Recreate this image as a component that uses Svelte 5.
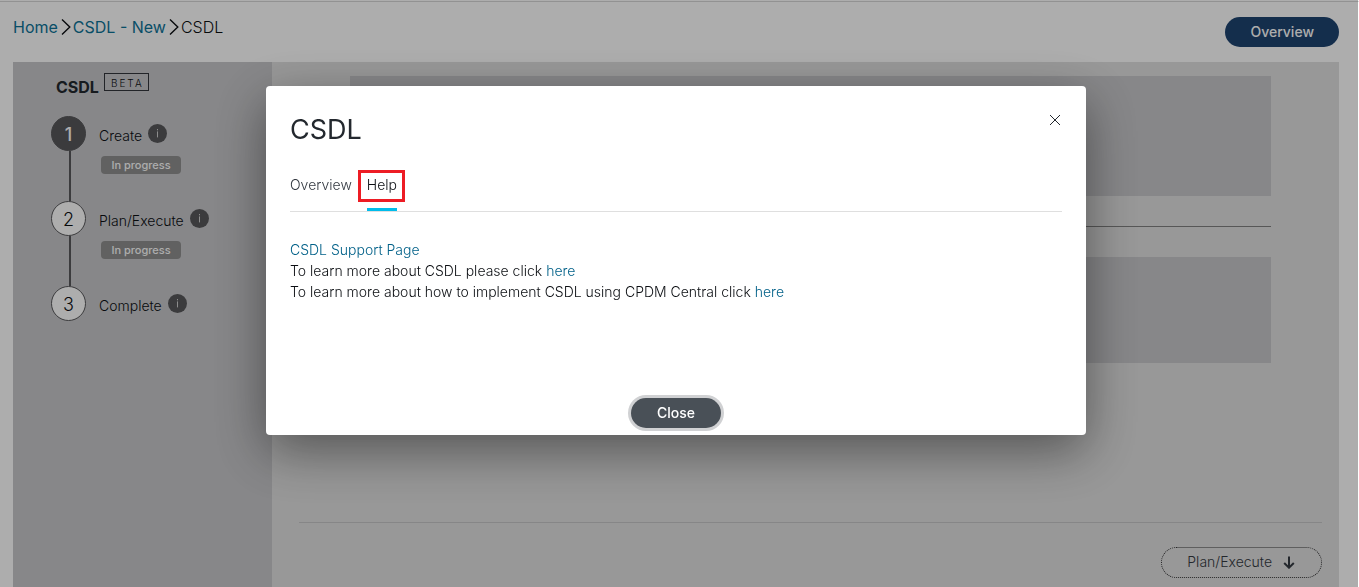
<script>
  let { steps = [
    { number: 1, label: 'Create', status: 'In progress', active: true },
    { number: 2, label: 'Plan/Execute', status: 'In progress', active: false },
    { number: 3, label: 'Complete', status: '', active: false }
  ] } = $props();

  let open = $state(true);
  let tab = $state('help');
</script>

<div class="page">
  <header>
    <nav class="crumbs" aria-label="Breadcrumb">
      <a href="#home">Home</a>
      <svg width="10" height="18" viewBox="0 0 10 18" aria-hidden="true"><path d="M1 1.5 8.8 9 1 16.5" /></svg>
      <a href="#new">CSDL - New</a>
      <svg width="10" height="18" viewBox="0 0 10 18" aria-hidden="true"><path d="M1 1.5 8.8 9 1 16.5" /></svg>
      <span>CSDL</span>
    </nav>
    <button class="pill primary" onclick={() => (open = true)}>Overview</button>
  </header>

  <div class="body">
    <aside>
      <div class="brand"><strong>CSDL</strong><span class="beta">BETA</span></div>
      <ol>
        {#each steps as step}
          <li>
            <span class="dot" class:active={step.active}>{step.number}</span>
            <div class="info">
              <div class="name">
                <span>{step.label}</span>
                <svg width="19" height="19" viewBox="0 0 19 19" aria-hidden="true">
                  <circle cx="9.5" cy="9.5" r="9.5" />
                  <path d="M9.5 7.4v6M9.5 5v1.3" />
                </svg>
              </div>
              {#if step.status}<span class="status">{step.status}</span>{/if}
            </div>
          </li>
        {/each}
      </ol>
    </aside>

    <main>
      <div class="panels">
        <div class="panel first"></div>
        <hr />
        <div class="panel second"></div>
      </div>
      <footer>
        <button class="next">
          <span>Plan/Execute</span>
          <svg width="12" height="13" viewBox="0 0 12 13" aria-hidden="true"><path d="M6 0.5v11M1.2 7 6 11.7 10.8 7" /></svg>
        </button>
      </footer>
    </main>
  </div>
</div>

{#if open}
  <div class="backdrop">
    <div class="modal" role="dialog" aria-modal="true" aria-labelledby="title">
      <div class="top">
        <h1 id="title">CSDL</h1>
        <button class="x" aria-label="Close dialog" onclick={() => (open = false)}>
          <svg width="12" height="12" viewBox="0 0 12 12" aria-hidden="true"><path d="M1 1l10 10M11 1 1 11" /></svg>
        </button>
      </div>
      <div class="tabs" role="tablist">
        <button role="tab" aria-selected={tab === 'overview'} onclick={() => (tab = 'overview')}>Overview</button>
        <button role="tab" class="marked" aria-selected={tab === 'help'} onclick={() => (tab = 'help')}>Help</button>
      </div>
      <div class="copy">
        <a href="#support">CSDL Support Page</a>
        <p>To learn more about CSDL please click <a href="#about">here</a></p>
        <p>To learn more about how to implement CSDL using CPDM Central click <a href="#central">here</a></p>
      </div>
      <button class="pill close" onclick={() => (open = false)}>Close</button>
    </div>
  </div>
{/if}

<style>
  :global(body) {
    background: #fff;
    overflow: hidden;
    font-family: Inter, "Liberation Sans", sans-serif;
    font-size: 14px;
    font-weight: 300;
    color: #0c0f13;
  }
  * { box-sizing: border-box; }
  button { font: inherit; cursor: pointer; }
  svg { fill: none; stroke: currentColor; flex: none; }
  a { color: #006088; text-decoration: none; }
  .page {
    display: flex;
    flex-direction: column;
    min-height: 100vh;
    padding: 1px 20px 0 13px;
    background: linear-gradient(#d8d8d8, #d8d8d8) 0 1px / 100% 1px no-repeat;
  }
  header {
    display: flex;
    justify-content: space-between;
    align-items: flex-start;
    height: 61px;
    padding-top: 16px;
  }
  .crumbs {
    display: flex;
    align-items: center;
    gap: 3px;
    font-size: 16px;
    line-height: 20px;
  }
  .crumbs a { font-weight: 400; color: #0d7398; }
  .crumbs svg { margin-right: -1px; stroke-width: 1.4; }
  .pill {
    height: 30px;
    padding: 0 26px 2px;
    border: 0;
    border-radius: 15px;
    color: #fff;
    font-weight: 500;
  }
  .primary { padding: 0 25px 2px; background: #1e4471; }
  .body { display: flex; flex: 1; background: #e0e0e0; }
  aside { width: 259px; background: #c7c7ca; }
  .brand { display: flex; gap: 5px; padding: 11px 0 0 43px; }
  .brand strong { padding-top: 4px; font-size: 16px; line-height: 20px; font-weight: 700; color: #23282e; }
  .beta {
    height: 18px;
    padding: 0 4px 0 6px;
    border: 1px solid #33363b;
    font-size: 10px;
    line-height: 19px;
    letter-spacing: 2px;
  }
  ol { margin: 0; padding: 19px 0 0 38px; list-style: none; }
  li { position: relative; display: flex; gap: 13px; height: 85px; }
  li:not(:last-child)::before {
    content: "";
    position: absolute;
    left: 18px;
    top: 35px;
    width: 2px;
    height: 50px;
    background: #58585b;
  }
  .dot {
    width: 35px;
    height: 35px;
    border: 1px solid #58585b;
    border-radius: 50%;
    background: #fff;
    font-size: 18px;
    line-height: 35px;
    text-align: center;
  }
  .dot.active { background: #58585b; color: #fff; font-weight: 500; }
  .name { display: flex; gap: 6px; padding-top: 8px; line-height: 24px; }
  .name svg { color: #d0d0d0; }
  .name circle { fill: #58585b; stroke: none; }
  .status {
    display: block;
    width: 80px;
    height: 18px;
    margin: 8px 0 0 2px;
    border-radius: 4px;
    background: #8f8f8f;
    color: #fff;
    font-size: 11px;
    font-weight: 500;
    line-height: 18px;
    text-align: center;
  }
  main { display: flex; flex: 1; flex-direction: column; padding: 14px 17px 9px 27px; }
  .panels { flex: 1; padding: 0 51px; }
  .panel { background: #c7c7ca; }
  .first { height: 120px; }
  .second { height: 106px; }
  hr { margin: 30px 0; border: 0; border-top: 1px solid #808080; }
  footer { display: flex; justify-content: flex-end; padding-top: 24px; border-top: 1px solid #c6c6c8; }
  .next {
    display: flex;
    align-items: center;
    gap: 11px;
    height: 31px;
    padding: 0 26px 0 25px;
    border: 1px dotted #39393b;
    border-radius: 16px;
    background: none;
    color: #343a42;
  }
  .next span { padding-bottom: 2px; }
  .next svg { stroke-width: 2; }
  .backdrop {
    position: fixed;
    inset: 0 1px 0 0;
    padding: 86px 6px 0 0;
    background: rgba(0, 0, 0, 0.32);
  }
  .modal {
    max-width: 820px;
    margin: 0 auto;
    padding: 24px 24px 7px;
    border-radius: 4px;
    background: #fff;
    box-shadow: 0 16px 52px rgba(0, 0, 0, 0.45);
  }
  .top { display: flex; justify-content: space-between; align-items: flex-start; }
  h1 { margin: 0; font-size: 27px; line-height: 40px; font-weight: 400; color: #23282e; }
  .x { display: flex; margin-top: 2px; padding: 2px 1px; border: 0; background: none; color: #23282e; }
  .tabs { display: flex; gap: 15px; margin-top: 20px; border-bottom: 1px solid #dfdfdf; }
  .tabs button {
    position: relative;
    padding: 5px 0 13px;
    border: 0;
    border-bottom: 3px solid transparent;
    background: none;
    color: #343a42;
    line-height: 20px;
  }
  .tabs button[aria-selected="true"] { border-color: #00bceb; color: #0c0f13; }
  .marked::after {
    content: "";
    position: absolute;
    inset: 0 -8px 6px -9px;
    border: 3px solid #ed1c24;
  }
  .copy { min-height: 158px; padding-top: 27px; line-height: 21px; }
  p { margin: 0; }
  .close { display: block; margin: 28px auto 0; background: #495057; box-shadow: 0 0 0 3px #d0d1d3; }
</style>
